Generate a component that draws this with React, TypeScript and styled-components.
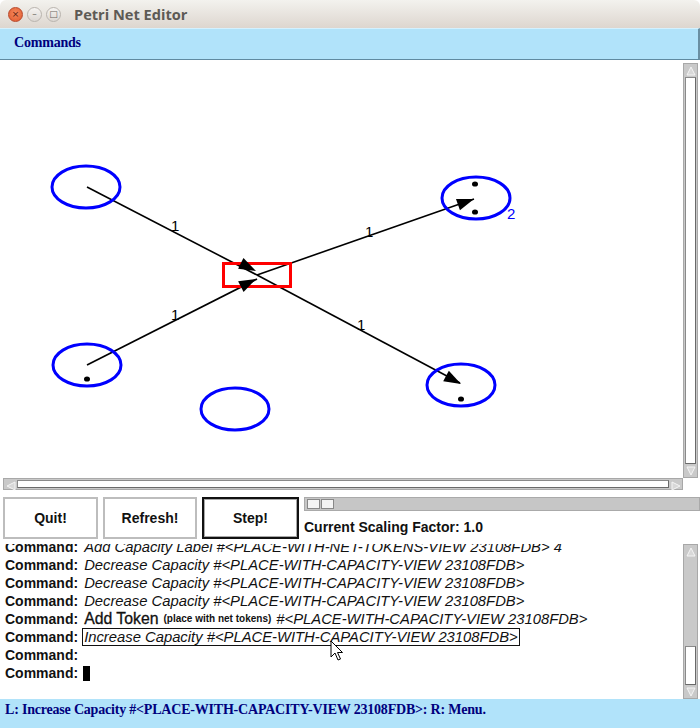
import React from "react";
import styled, { createGlobalStyle } from "styled-components";

const Global = createGlobalStyle`
  html, body { margin: 0; padding: 0; background: #ffffff; }
  body { width: 700px; height: 728px; overflow: hidden; font-family: "Liberation Sans", Arial, sans-serif; }
`;

const Window = styled.div`
  width: 700px;
  height: 728px;
  display: flex;
  flex-direction: column;
  background: #ffffff;
  position: relative;
  overflow: hidden;
`;

const TitleBar = styled.div`
  height: 28px;
  flex: none;
  display: flex;
  align-items: center;
  padding-left: 8px;
  background: linear-gradient(#f3f2ee, #ddd6cf);
  border-top-right-radius: 6px;
  border-top-left-radius: 6px;
  box-sizing: border-box;
`;

const WinButton = styled.div<{ $close?: boolean }>`
  width: 15px;
  height: 15px;
  border-radius: 50%;
  margin-right: 4px;
  box-sizing: border-box;
  border: 1px solid ${(p) => (p.$close ? "#b8472a" : "#b9b4ae")};
  background: ${(p) =>
    p.$close
      ? "radial-gradient(circle at 50% 40%, #f58a5e, #e0582c)"
      : "linear-gradient(#f6f4f2, #dcd7d2)"};
  display: flex;
  align-items: center;
  justify-content: center;
  font-size: 9px;
  line-height: 1;
  color: ${(p) => (p.$close ? "#5a2010" : "#6a6560")};
  font-family: "DejaVu Sans", sans-serif;
`;

const Title = styled.div`
  margin-left: 9px;
  font-family: "Open Sans", "DejaVu Sans", sans-serif;
  font-weight: 700;
  font-size: 14.6px;
  color: #5d5a55;
`;

const InfoBar = styled.div<{ $h: number }>`
  height: ${(p) => p.$h}px;
  flex: none;
  box-sizing: border-box;
  background: #b1e3fa;
  font-family: "Liberation Serif", "Times New Roman", serif;
  font-weight: 700;
  font-size: 14px;
  color: #00007d;
  letter-spacing: -0.2px;
`;

const CommandsBar = styled(InfoBar)`
  border-top: 1px solid #d4f1ff;
  border-bottom: 1px solid #5f8aa0;
  border-right: 2px solid #6a8fa2;
  padding: 6px 0 0 14px;
`;

const StatusBar = styled(InfoBar)`
  padding: 3px 0 0 5px;
`;

const CanvasPane = styled.div`
  height: 431px;
  flex: none;
  display: grid;
  grid-template-columns: 680px 15px;
  grid-template-rows: 415px 12px;
  padding: 3px 2px 0 3px;
  box-sizing: border-box;
`;

const Track = styled.div<{ $vertical?: boolean }>`
  background: #c9c9c9;
  box-sizing: border-box;
  border: 1px solid #a8a8a8;
  display: flex;
  flex-direction: ${(p) => (p.$vertical ? "column" : "row")};
  align-items: stretch;
  padding: 1px;
  gap: 1px;
`;

const Arrow = styled.div`
  flex: none;
  width: 11px;
  height: 11px;
  display: flex;
  align-items: center;
  justify-content: center;
`;

const Thumb = styled.div<{ $grow?: number }>`
  flex: ${(p) => p.$grow ?? 1};
  background: #ffffff;
  border: 1px solid #8a8a8a;
  border-right-color: #6a6a6a;
  border-bottom-color: #6a6a6a;
  box-sizing: border-box;
`;

const Spacer = styled.div<{ $grow: number }>`
  flex: ${(p) => p.$grow};
`;

const Controls = styled.div`
  flex: none;
  display: flex;
  align-items: flex-start;
  padding: 6px 0 0 3px;
  height: 53px;
  box-sizing: border-box;
`;

const Button = styled.div<{ $w: number; $active?: boolean }>`
  width: ${(p) => p.$w}px;
  height: 42px;
  box-sizing: border-box;
  margin-right: 5px;
  border: 2px solid ${(p) => (p.$active ? "#111111" : "#bdbdbd")};
  outline: ${(p) => (p.$active ? "1px solid #a8a8a8" : "none")};
  outline-offset: -3px;
  display: flex;
  align-items: center;
  justify-content: center;
  font-family: "Liberation Sans", Arial, sans-serif;
  font-size: 14px;
  font-weight: 700;
  color: #111;
  background: #ffffff;
`;

const SideColumn = styled.div`
  flex: 1;
  display: flex;
  flex-direction: column;
`;

const Slider = styled.div`
  height: 14px;
  background: #c6c6c6;
  border: 1px solid #aaaaaa;
  box-sizing: border-box;
  display: flex;
  align-items: center;
  padding-left: 2px;
  gap: 1px;
`;

const SliderBox = styled.div`
  width: 13px;
  height: 10px;
  background: #f4f4f4;
  border: 1px solid #888;
  box-sizing: border-box;
`;

const ScaleLabel = styled.div`
  margin-top: 8px;
  font-family: "Liberation Sans", Arial, sans-serif;
  font-size: 14px;
  font-weight: 700;
  color: #111;
`;

const LogPane = styled.div`
  height: 155px;
  flex: none;
  display: grid;
  grid-template-columns: 1fr 15px;
  padding-right: 2px;
  box-sizing: border-box;
`;

const LogText = styled.div`
  overflow: hidden;
  position: relative;
`;

const LogInner = styled.div`
  margin-top: -6px;
  padding-left: 5px;
`;

const Line = styled.div`
  height: 18px;
  line-height: 18px;
  font-family: "Liberation Sans", Arial, sans-serif;
  font-size: 14px;
  color: #111;
  white-space: nowrap;
  display: flex;
  align-items: center;
`;

const Prompt = styled.span`
  font-weight: 700;
  margin-right: 6px;
`;

const Ital = styled.span<{ $boxed?: boolean }>`
  font-style: italic;
  font-size: 14.8px;
  border: 1px solid ${(p) => (p.$boxed ? "#111" : "transparent")};
  padding: 0 1px;
  line-height: 16px;
  margin-left: -2px;
`;

const Plain = styled.span`
  font-weight: 400;
  font-size: 15.8px;
  -webkit-text-stroke: 0.3px #111;
  margin-right: 5px;
`;

const Small = styled.span`
  font-weight: 700;
  font-size: 10px;
  margin-right: 5px;
`;

const Caret = styled.span`
  display: inline-block;
  width: 7px;
  height: 15px;
  background: #000;
  margin-left: -1px;
`;

const LogScroll = styled(Track)`
  margin-top: 0;
`;

const Pointer = styled.svg`
  position: absolute;
  left: 330px;
  top: 640px;
`;

const blue = "#0000ff";

function Place({ cx, cy, tokens = [] }: { cx: number; cy: number; tokens?: [number, number][] }) {
  return (
    <g>
      <ellipse cx={cx} cy={cy} rx={34} ry={21} fill="none" stroke={blue} strokeWidth={3} />
      {tokens.map(([x, y], i) => (
        <ellipse key={i} cx={x} cy={y} rx={3} ry={2.6} fill="#000" />
      ))}
    </g>
  );
}

function ArrowHead({ tx, ty, fx, fy }: { tx: number; ty: number; fx: number; fy: number }) {
  const dx = tx - fx;
  const dy = ty - fy;
  const len = Math.hypot(dx, dy);
  const ux = dx / len;
  const uy = dy / len;
  const L = 17;
  const W = 6;
  const bx = tx - ux * L;
  const by = ty - uy * L;
  const pts = `${tx},${ty} ${bx - uy * W},${by + ux * W} ${bx + uy * W},${by - ux * W}`;
  return <polygon points={pts} fill="#000" />;
}

const LabelText = styled.text`
  font-family: "Liberation Sans", Arial, sans-serif;
  font-size: 15px;
`;

function Net() {
  return (
    <svg width={680} height={415} viewBox="3 63 680 415" style={{ display: "block", background: "#fff" }}>
      <g stroke="#000" strokeWidth={1.6}>
        <line x1={87} y1={187} x2={257} y2={275} />
        <line x1={87} y1={365} x2={257} y2={279} />
        <line x1={257} y1={275} x2={474} y2={199} />
        <line x1={257} y1={275} x2={460} y2={383} />
      </g>
      <Place cx={86} cy={187} />
      <Place cx={476} cy={198} tokens={[[475, 184], [475, 212]]} />
      <Place cx={87} cy={365} tokens={[[87, 379]]} />
      <Place cx={235} cy={409} />
      <Place cx={461} cy={385} tokens={[[461, 399]]} />
      <rect x={223.5} y={263.5} width={67} height={23} fill="none" stroke="#ff0000" strokeWidth={3} />
      <ArrowHead tx={256} ty={271} fx={87} fy={187} />
      <ArrowHead tx={256} ty={279} fx={87} fy={365} />
      <ArrowHead tx={474} ty={199} fx={257} fy={275} />
      <ArrowHead tx={461} ty={384} fx={257} fy={275} />
      <LabelText x={171} y={231}>1</LabelText>
      <LabelText x={365} y={237}>1</LabelText>
      <LabelText x={171} y={320}>1</LabelText>
      <LabelText x={357} y={330}>1</LabelText>
      <LabelText x={507} y={219} fill={blue}>2</LabelText>
    </svg>
  );
}

function Tri({ dir }: { dir: "up" | "down" | "left" | "right" }) {
  const pts = {
    up: "1,9 5,1 9,9",
    down: "1,1 5,9 9,1",
    left: "9,1 1,5 9,9",
    right: "1,1 9,5 1,9",
  }[dir];
  return (
    <svg width={10} height={10}>
      <polygon points={pts} fill="#d8d8d8" stroke="#f4f4f4" strokeWidth={1} />
    </svg>
  );
}

export default function App() {
  return (
    <Window>
      <Global />
      <TitleBar>
        <WinButton $close>×</WinButton>
        <WinButton>–</WinButton>
        <WinButton>□</WinButton>
        <Title>Petri Net Editor</Title>
      </TitleBar>
      <CommandsBar $h={32}>Commands</CommandsBar>
      <CanvasPane>
        <Net />
        <Track $vertical>
          <Arrow><Tri dir="up" /></Arrow>
          <Thumb />
          <Arrow><Tri dir="down" /></Arrow>
        </Track>
        <Track>
          <Arrow><Tri dir="left" /></Arrow>
          <Thumb />
          <Arrow><Tri dir="right" /></Arrow>
        </Track>
        <div />
      </CanvasPane>
      <Controls>
        <Button $w={95}>Quit!</Button>
        <Button $w={94}>Refresh!</Button>
        <Button $w={97} $active>Step!</Button>
        <SideColumn>
          <Slider>
            <SliderBox />
            <SliderBox />
          </Slider>
          <ScaleLabel>Current Scaling Factor: 1.0</ScaleLabel>
        </SideColumn>
      </Controls>
      <LogPane>
        <LogText>
          <LogInner>
            <Line><Prompt>Command:</Prompt><Ital>Add Capacity Label #&lt;PLACE-WITH-NET-TOKENS-VIEW 23108FDB&gt; 4</Ital></Line>
            <Line><Prompt>Command:</Prompt><Ital>Decrease Capacity #&lt;PLACE-WITH-CAPACITY-VIEW 23108FDB&gt;</Ital></Line>
            <Line><Prompt>Command:</Prompt><Ital>Decrease Capacity #&lt;PLACE-WITH-CAPACITY-VIEW 23108FDB&gt;</Ital></Line>
            <Line><Prompt>Command:</Prompt><Ital>Decrease Capacity #&lt;PLACE-WITH-CAPACITY-VIEW 23108FDB&gt;</Ital></Line>
            <Line><Prompt>Command:</Prompt><Plain>Add Token</Plain><Small>(place with net tokens)</Small><Ital>#&lt;PLACE-WITH-CAPACITY-VIEW 23108FDB&gt;</Ital></Line>
            <Line><Prompt>Command:</Prompt><Ital $boxed>Increase Capacity #&lt;PLACE-WITH-CAPACITY-VIEW 23108FDB&gt;</Ital></Line>
            <Line><Prompt>Command:</Prompt></Line>
            <Line><Prompt>Command:</Prompt><Caret /></Line>
          </LogInner>
        </LogText>
        <LogScroll $vertical>
          <Arrow><Tri dir="up" /></Arrow>
          <Spacer $grow={93} />
          <Thumb $grow={40} />
          <Arrow><Tri dir="down" /></Arrow>
        </LogScroll>
      </LogPane>
      <StatusBar $h={30}>L: Increase Capacity #&lt;PLACE-WITH-CAPACITY-VIEW 23108FDB&gt;: R: Menu.</StatusBar>
      <Pointer width={14} height={22} viewBox="0 0 14 22">
        <polygon points="1,1 1,17 5,13 8,20 10.5,19 7.5,12.5 12.5,12.5" fill="#fff" stroke="#000" strokeWidth={1} />
      </Pointer>
    </Window>
  );
}
